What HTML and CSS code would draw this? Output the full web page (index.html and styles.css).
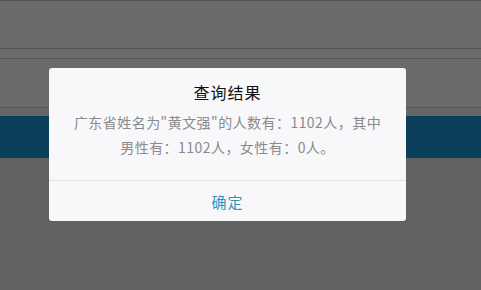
FILE: index.html
```html
<!DOCTYPE html>
<html lang="zh-CN">
<head>
<meta charset="utf-8">
<link rel="stylesheet" href="styles.css">
</head>
<body>
<div class="page">
  <div class="bar bar-top"></div>
  <div class="bar bar-thin"></div>
  <div class="bar bar-mid"></div>
  <div class="bar bar-gap"></div>
  <div class="band"></div>
  <div class="rest"></div>
</div>
<div class="dialog">
  <div class="dialog-body">
    <div class="dialog-title">查询结果</div>
    <div class="dialog-text">广东省姓名为"黄文强"的人数有：1102人，其中<br>男性有：1102人，女性有：0人。</div>
  </div>
  <div class="dialog-btn">确定</div>
</div>
</body>
</html>
```
FILE: styles.css
```css
html, body {
  margin: 0;
  padding: 0;
  width: 481px;
  height: 290px;
  overflow: hidden;
  background: #626262;
  font-family: "Noto Sans CJK SC", "Noto Sans", sans-serif;
}
.page {
  display: flex;
  flex-direction: column;
  height: 290px;
}
.bar {
  background: #6a6a6a;
  border-bottom: 1px solid #545454;
}
.bar-top {
  height: 47px;
  border-top: 1px solid #545454;
}
.bar-thin { height: 9px; }
.bar-mid { height: 48px; }
.bar-gap { height: 8px; border-bottom: none; background: #666; }
.band {
  height: 42px;
  background: #0b3f5b;
}
.rest {
  flex: 1;
  background: #626262;
}
.dialog {
  position: absolute;
  left: 49px;
  top: 68px;
  width: 357px;
  height: 153px;
  background: #f8f8fa;
  border-radius: 3px;
  display: flex;
  flex-direction: column;
}
.dialog-body {
  padding: 14px 0 0;
  height: 98px;
  border-bottom: 1px solid #e2e2e4;
  text-align: center;
}
.dialog-title {
  font-size: 16px;
  line-height: 20px;
  color: #111;
  letter-spacing: 1px;
}
.dialog-text {
  margin-top: 8px;
  font-size: 14px;
  line-height: 25px;
  color: #8a8a8a;
  letter-spacing: 0.45px;
}
.dialog-btn {
  flex: 1;
  display: flex;
  align-items: center;
  justify-content: center;
  font-size: 15px;
  color: #2f95bd;
  letter-spacing: 1px;
}
```
